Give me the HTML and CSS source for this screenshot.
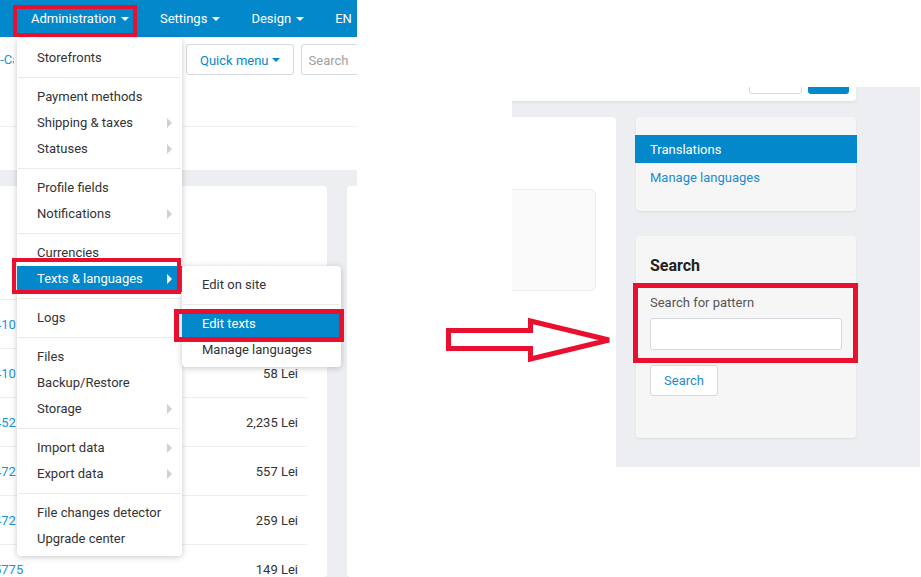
FILE: index.html
```html
<!DOCTYPE html>
<html lang="en">
<head>
    <meta charset="UTF-8">
    <meta name="viewport" content="width=device-width, initial-scale=1.0">
    <title>Edit texts</title>
    <link rel="stylesheet" href="styles.css">
</head>
<body>
    <!-- Screenshot 1: admin menu -->
    <section class="shot shot-admin">
        <nav class="topnav">
            <span class="nav-item">Administration <i class="caret"></i></span>
            <span class="nav-item">Settings <i class="caret"></i></span>
            <span class="nav-item">Design <i class="caret"></i></span>
            <span class="nav-item">EN</span>
        </nav>
        <div class="toolbar">
            <div class="crumb"><a class="crumb-link">CS-Cart</a></div>
            <button class="btn-outline">Quick menu <i class="caret"></i></button>
            <input class="search-box" type="text" placeholder="Search">
        </div>
        <div class="tabs-strip"></div>
        <div class="dashboard">
            <div class="card card-orders">
                <div class="order-row"></div>
                <div class="order-row"><a>410</a><span>1,058 Lei</span></div>
                <div class="order-row"><a>410</a><span>58 Lei</span></div>
                <div class="order-row"><a>452</a><span>2,235 Lei</span></div>
                <div class="order-row"><a>472</a><span>557 Lei</span></div>
                <div class="order-row"><a>472</a><span>259 Lei</span></div>
                <div class="order-row"><a>5775</a><span>149 Lei</span></div>
            </div>
            <div class="card card-side"></div>
        </div>

        <ul class="dropdown">
            <li>Storefronts</li>
            <li class="divider"></li>
            <li>Payment methods</li>
            <li class="has-sub">Shipping &amp; taxes</li>
            <li class="has-sub">Statuses</li>
            <li class="divider"></li>
            <li>Profile fields</li>
            <li class="has-sub">Notifications</li>
            <li class="divider"></li>
            <li>Currencies</li>
            <li class="has-sub active">Texts &amp; languages</li>
            <li class="divider"></li>
            <li>Logs</li>
            <li class="divider"></li>
            <li>Files</li>
            <li>Backup/Restore</li>
            <li class="has-sub">Storage</li>
            <li class="divider"></li>
            <li class="has-sub">Import data</li>
            <li class="has-sub">Export data</li>
            <li class="divider"></li>
            <li>File changes detector</li>
            <li>Upgrade center</li>
        </ul>
        <ul class="dropdown submenu">
            <li>Edit on site</li>
            <li class="divider"></li>
            <li class="active">Edit texts</li>
            <li>Manage languages</li>
        </ul>
    </section>

    <!-- Screenshot 2: translations page -->
    <section class="shot shot-translations">
        <div class="page-header">
            <span class="hbtn"></span>
            <span class="hbtn hbtn-primary"></span>
        </div>
        <div class="page-body">
            <div class="main-card">
                <div class="placeholder-box"></div>
            </div>
            <aside class="sidebar">
                <div class="side-card side-nav">
                    <a class="side-link active">Translations</a>
                    <a class="side-link">Manage languages</a>
                </div>
                <div class="side-card side-search">
                    <h3>Search</h3>
                    <label for="pattern">Search for pattern</label>
                    <input id="pattern" type="text">
                    <button class="btn-search">Search</button>
                </div>
            </aside>
        </div>
    </section>

    <!-- freccia -->
    <svg class="arrow" width="921" height="577" viewBox="0 0 921 577">
        <polygon points="448.5,330.5 530.5,330.5 530.5,321 609,340 530.5,359 530.5,348.5 448.5,348.5"
                 fill="#fff" stroke="#e8102e" stroke-width="5" stroke-linejoin="miter"/>
    </svg>

    <!-- riquadri rossi -->
    <div class="mark mark-admin"></div>
    <div class="mark mark-texts"></div>
    <div class="mark mark-edit"></div>
    <div class="mark mark-search"></div>
</body>
</html>
```

FILE: styles.css
```css
/* Impostazioni generali */
html, body {
    margin: 0;
    padding: 0;
}

body {
    position: relative;
    width: 921px;
    height: 577px;
    overflow: hidden;
    background: #fff;
    font-family: Roboto, "Liberation Sans", Arial, sans-serif;
    font-size: 13px;
    color: #333;
}

.shot {
    position: absolute;
    overflow: hidden;
    box-sizing: border-box;
}

.caret {
    display: inline-block;
    width: 0;
    height: 0;
    border-top: 4px solid currentColor;
    border-left: 4px solid transparent;
    border-right: 4px solid transparent;
}

/* ---------- Screenshot 1 ---------- */
.shot-admin {
    left: 0;
    top: 0;
    width: 357px;
    height: 577px;
    background: #fff;
}

.topnav {
    height: 37px;
    display: flex;
    align-items: center;
    gap: 31px;
    padding-left: 31px;
    background: #0388cc;
    color: #fff;
    white-space: nowrap;
}

.nav-item {
    display: flex;
    align-items: center;
    gap: 5px;
}

.toolbar {
    box-sizing: border-box;
    height: 90px;
    display: flex;
    align-items: flex-start;
    padding-top: 7px;
    border-bottom: 1px solid #eef0f2;
    white-space: nowrap;
}

.crumb {
    width: 202px;
    margin-left: -16px;
    flex-shrink: 0;
    line-height: 32px;
}

.crumb-link {
    display: inline-block;
    width: 30px;
    overflow: hidden;
    vertical-align: top;
    color: #1d92d6;
}

.btn-outline {
    flex-shrink: 0;
    height: 31px;
    padding: 1px 13px 0;
    display: flex;
    align-items: center;
    gap: 3px;
    border: 1px solid #d3d9de;
    border-radius: 3px;
    background: #fff;
    color: #0388cc;
    font: inherit;
}

.search-box {
    flex-shrink: 0;
    box-sizing: border-box;
    width: 160px;
    height: 31px;
    margin-left: 7px;
    padding: 1px 7px 0;
    border: 1px solid #d3d9de;
    border-radius: 3px;
    font: inherit;
}

.search-box::placeholder {
    color: #a0a0a0;
}

.tabs-strip {
    height: 43px;
    box-shadow: 0 1px 2px rgba(0, 0, 0, 0.05);
}

.dashboard {
    display: flex;
    gap: 20px;
    height: 391px;
    padding-top: 16px;
    background: #eceef1;
}

.card {
    background: #fff;
    border-radius: 4px;
    flex-shrink: 0;
}

.card-orders {
    width: 427px;
    margin-left: -100px;
    padding: 65px 20px 0 94px;
    box-sizing: border-box;
}

.order-row {
    height: 48px;
    display: flex;
    align-items: center;
    justify-content: space-between;
    padding-right: 9px;
    border-bottom: 1px solid #eceef1;
}

.order-row a {
    color: #1d92d6;
}

.card-side {
    width: 200px;
}

/* Menu a tendina */
.dropdown {
    position: absolute;
    left: 17px;
    top: 38px;
    width: 165px;
    margin: 0;
    padding: 7px 0 4px;
    list-style: none;
    background: #fff;
    border-radius: 4px;
    box-shadow: 0 1px 6px rgba(0, 0, 0, 0.22);
    box-sizing: border-box;
    white-space: nowrap;
}

.dropdown::before {
    content: "";
    position: absolute;
    left: 12px;
    top: -4px;
    border-bottom: 4px solid #fff;
    border-left: 4px solid transparent;
    border-right: 4px solid transparent;
}

.dropdown li {
    position: relative;
    height: 26px;
    line-height: 26px;
    padding-left: 20px;
    color: #333;
}

.dropdown li.divider {
    height: 1px;
    margin: 6px 1px;
    padding: 0;
    background: #e9eaeb;
}

.dropdown li.has-sub::after {
    content: "";
    position: absolute;
    right: 10px;
    top: 8px;
    border-left: 5px solid #d0d0d0;
    border-top: 5px solid transparent;
    border-bottom: 5px solid transparent;
}

.dropdown li.active {
    background: #0388cc;
    color: #fff;
}

.dropdown li.active.has-sub::after {
    border-left-color: #fff;
}

.submenu {
    left: 182px;
    top: 266px;
    width: 159px;
    padding: 6px 0 4px;
}

.submenu::before {
    display: none;
}

/* ---------- Freccia ---------- */
.arrow {
    position: absolute;
    left: 0;
    top: 0;
}

/* ---------- Screenshot 2 ---------- */
.shot-translations {
    left: 512px;
    top: 87px;
    width: 408px;
    height: 380px;
    background: #eceef1;
}

.page-header {
    box-sizing: border-box;
    width: 344px;
    height: 14px;
    display: flex;
    justify-content: flex-end;
    align-items: flex-end;
    gap: 6px;
    padding: 0 7px 7px 0;
    background: #fff;
    border-radius: 0 0 4px 0;
    box-shadow: 0 2px 3px rgba(0, 0, 0, 0.06);
}

.hbtn {
    flex-shrink: 0;
    box-sizing: border-box;
    width: 53px;
    height: 24px;
    border: 1px solid #d3d9de;
    border-radius: 3px;
}

.hbtn-primary {
    width: 41px;
    border: none;
    background: #0388cc;
}

.page-body {
    display: flex;
    gap: 20px;
    height: 366px;
    box-sizing: border-box;
    padding-top: 16px;
}

.main-card {
    width: 104px;
    flex-shrink: 0;
    background: #fff;
    border-radius: 0 4px 0 0;
    overflow: hidden;
}

.placeholder-box {
    width: 94px;
    height: 102px;
    margin: 72px 0 0 -10px;
    box-sizing: border-box;
    background: #fafafa;
    border: 1px solid #ececec;
    border-radius: 6px;
}

.sidebar {
    width: 220px;
    flex-shrink: 0;
    display: flex;
    flex-direction: column;
    gap: 25px;
}

.side-card {
    background: #f6f6f6;
    border-radius: 4px;
    box-shadow: 0 1px 2px rgba(0, 0, 0, 0.08);
    box-sizing: border-box;
}

.side-nav {
    padding: 18px 0 20px;
}

.side-link {
    display: block;
    height: 28px;
    line-height: 29px;
    padding-left: 14px;
    color: #1d8bcf;
}

.side-link.active {
    margin: 0 -1px;
    padding-left: 15px;
    background: #0388cc;
    color: #fff;
}

.side-search {
    display: flex;
    flex-direction: column;
    align-items: flex-start;
    padding: 20px 14px 42px;
}

.side-search h3 {
    margin: 0 0 17px;
    font-size: 16px;
    line-height: 20px;
    font-weight: bold;
    color: #222;
}

.side-search label {
    line-height: 20px;
    color: #555;
}

.side-search input {
    box-sizing: border-box;
    width: 192px;
    height: 32px;
    margin-top: 5px;
    border: 1px solid #d3d9de;
    border-radius: 3px;
    background: #fff;
}

.btn-search {
    margin-top: 15px;
    width: 68px;
    height: 31px;
    padding-top: 1px;
    border: 1px solid #d3d9de;
    border-radius: 3px;
    background: #fff;
    color: #1d8bcf;
    font: inherit;
}

/* ---------- Riquadri rossi ---------- */
.mark {
    position: absolute;
    box-sizing: border-box;
    border: 4px solid #e8102e;
}

.mark-admin  { left: 13px;  top: 5px;   width: 124px; height: 32px; }
.mark-texts  { left: 12px;  top: 258px; width: 169px; height: 36px; }
.mark-edit   { left: 174px; top: 309px; width: 170px; height: 33px; border-width: 5px; }
.mark-search { left: 633px; top: 283px; width: 225px; height: 80px; border-width: 5px; }
```
